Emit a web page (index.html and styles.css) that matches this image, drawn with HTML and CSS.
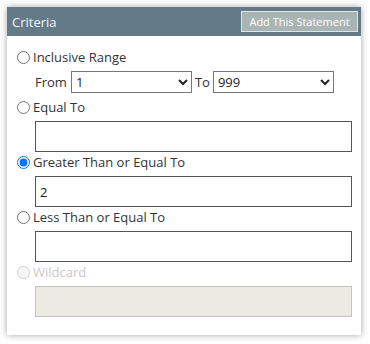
FILE: index.html
```html
<!DOCTYPE html>
<html lang="en">
<head>
    <meta charset="UTF-8">
    <title>Criteria</title>
    <link rel="stylesheet" href="styles.css">
</head>
<body>
    <div class="panel">
        <div class="panel-header">
            <span class="panel-title">Criteria</span>
            <button class="btn-add">Add This Statement</button>
        </div>
        <div class="panel-body">
            <label class="option">
                <input type="radio" name="crit"> Inclusive Range
            </label>
            <div class="range-row">
                <span>From</span>
                <select class="sel">
                    <option>1</option>
                </select>
                <span>To</span>
                <select class="sel">
                    <option>999</option>
                </select>
            </div>

            <label class="option">
                <input type="radio" name="crit"> Equal To
            </label>
            <input type="text" class="field">

            <label class="option">
                <input type="radio" name="crit" checked> Greater Than or Equal To
            </label>
            <input type="text" class="field" value="2">

            <label class="option">
                <input type="radio" name="crit"> Less Than or Equal To
            </label>
            <input type="text" class="field">

            <label class="option disabled">
                <input type="radio" name="crit" disabled> Wildcard
            </label>
            <input type="text" class="field" disabled>
        </div>
    </div>
</body>
</html>
```

FILE: styles.css
```css
body {
    margin: 0;
    padding: 7px;
    background: #fff;
    font-family: "Open Sans", sans-serif;
    font-size: 13px;
    color: #333;
}

.panel {
    width: 354px;
    height: 328px;
    background: #fff;
    box-shadow: 0 0 7px rgba(0, 0, 0, 0.35);
}

.panel-header {
    height: 29px;
    background: #647a86;
    display: flex;
    align-items: center;
    justify-content: space-between;
    padding: 0 3px 0 5px;
}

.panel-title {
    color: #f4f6f7;
    font-size: 13px;
}

.btn-add {
    width: 117px;
    height: 21px;
    padding: 0;
    background: #a9b5b5;
    border: 1px solid #dfe5e5;
    color: #fff;
    font-family: "Open Sans", sans-serif;
    font-size: 11px;
}

.panel-body {
    padding: 11px 9px 0 10px;
}

.option {
    display: flex;
    align-items: center;
    height: 20px;
    margin-bottom: 4px;
}

.option input {
    margin: 0 3px 0 0;
    width: 13px;
    height: 13px;
}

.option.disabled {
    color: #c8c8c8;
}

.range-row {
    display: flex;
    align-items: center;
    gap: 3px;
    padding-left: 18px;
    margin-bottom: 4px;
}

.range-row span:first-child {
    margin-right: 1px;
}

.sel {
    width: 121px;
    height: 22px;
    font-family: "Open Sans", sans-serif;
    font-size: 13px;
    color: #222;
    border: 1px solid #767676;
    border-radius: 0;
    background: #fff;
}

.field {
    display: block;
    box-sizing: border-box;
    width: 317px;
    height: 31px;
    margin: 0 0 0 18px;
    padding: 0 4px;
    border: 1px solid #555;
    font-family: "Open Sans", sans-serif;
    font-size: 13px;
    color: #222;
}

.field:disabled {
    background: #ebebe4;
    border-color: #c3c3c3;
}
```
